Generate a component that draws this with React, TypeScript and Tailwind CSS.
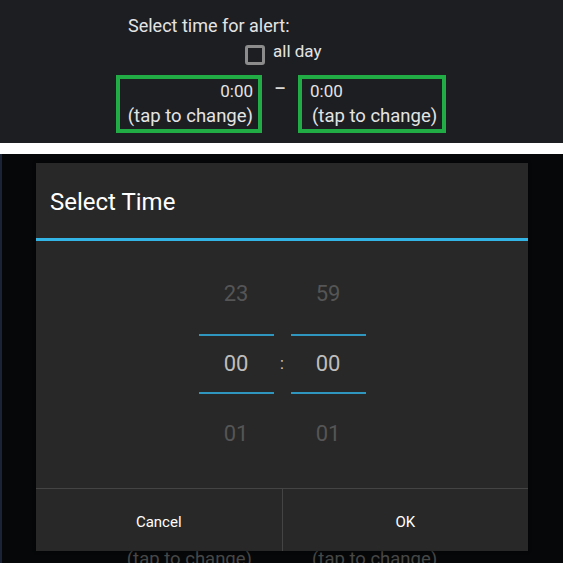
export default function App() {
  return (
    <div className="w-[563px] h-[563px] overflow-hidden bg-white flex flex-col font-['Roboto','Liberation_Sans',sans-serif]">
      {/* alert settings strip */}
      <section className="h-[143px] shrink-0 bg-[#1c1e22] text-[#e4e4e4]">
        <div className="pl-[128px] pt-[14px] text-[18px] leading-[24px]">Select time for alert:</div>
        <div className="pl-[245px] mt-[6px] flex items-start gap-[8px]">
          <span className="mt-[1px] w-[20px] h-[20px] rounded-[3px] border-[3px] border-[#8c8c8c]" />
          <span className="text-[17px] leading-[20px] -mt-[3px]">all day</span>
        </div>
        <div className="pl-[116px] mt-[10px] flex items-start">
          <TimeBox align="right" width="w-[146px]" />
          <span className="w-[36px] text-center text-[18px] leading-[28px] font-medium text-[#d8d8d8]">–</span>
          <TimeBox align="left" width="w-[148px]" />
        </div>
      </section>

      <div className="h-[11px] shrink-0" />

      {/* time picker dialog over the dimmed screen */}
      <section className="relative flex-1 bg-[#060708] border-l-2 border-[#1a2436] overflow-hidden">
        <div className="flex pt-[393px] text-[18.5px] leading-[24px] text-[#474747]">
          <span className="w-[250px] text-right">(tap to change)</span>
          <span className="pl-[60px]">(tap to change)</span>
        </div>
        <div className="absolute left-[34px] top-[9px] w-[492px] h-[388px] bg-[#282828] shadow-[0_0_3px_rgba(0,0,0,0.6)] flex flex-col">
          <div className="h-[75px] pl-[14px] pt-[23px] text-[24px] leading-[32px] text-white">Select Time</div>
          <div className="h-[3px] bg-[#33b5e5]" />
          <div className="h-[247px] flex justify-center">
            <Column values={["23", "00", "01"]} />
            <div className="w-[17px] pt-[111px] text-center text-[16px] leading-[24px] text-[#cfcfcf]">:</div>
            <Column values={["59", "00", "01"]} />
          </div>
          <div className="flex-1 border-t border-[#444444] flex text-[15px] text-white">
            <button className="flex-1 border-r border-[#444444] pt-[4px]">Cancel</button>
            <button className="flex-1 pt-[4px]">OK</button>
          </div>
        </div>
      </section>
    </div>
  )
}

function TimeBox({ align, width }: { align: "left" | "right"; width: string }) {
  return (
    <div
      className={`${width} h-[58px] border-[4px] border-[#22ac46] ${
        align === "right" ? "text-right pr-[5px]" : "text-left pl-[8px]"
      }`}
    >
      <div className="text-[17px] leading-[25px]">0:00</div>
      <div className={`text-[18.5px] leading-[24px] ${align === "left" ? "pl-[2px]" : ""}`}>(tap to change)</div>
    </div>
  )
}

function Column({ values }: { values: string[] }) {
  return (
    <div className="w-[75px] flex flex-col items-stretch text-center text-[22px]">
      <div className="mt-[36px] h-[34px] leading-[34px] text-[#555555]">{values[0]}</div>
      <div className="mt-[23px] h-[2px] bg-[#2f96c0]" />
      <div className="h-[56px] leading-[56px] text-[#bdbdbd]">{values[1]}</div>
      <div className="h-[2px] bg-[#2f96c0]" />
      <div className="mt-[23px] h-[34px] leading-[34px] text-[#555555]">{values[2]}</div>
    </div>
  )
}
